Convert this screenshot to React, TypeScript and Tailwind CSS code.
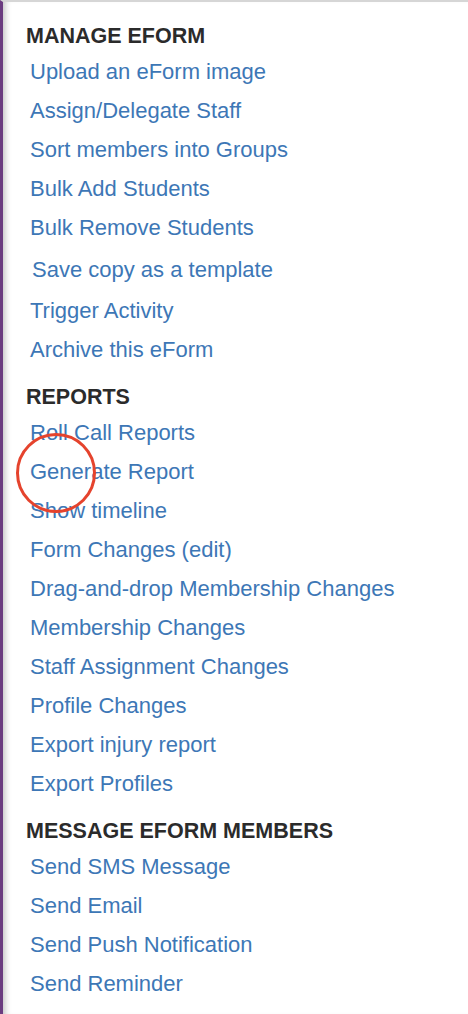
const manage = [
  "Upload an eForm image",
  "Assign/Delegate Staff",
  "Sort members into Groups",
  "Bulk Add Students",
  "Bulk Remove Students",
];

const reports = [
  "Roll Call Reports",
  "Generate Report",
  "Show timeline",
  "Form Changes (edit)",
  "Drag-and-drop Membership Changes",
  "Membership Changes",
  "Staff Assignment Changes",
  "Profile Changes",
  "Export injury report",
  "Export Profiles",
];

const message = [
  "Send SMS Message",
  "Send Email",
  "Send Push Notification",
  "Send Reminder",
];

function Heading({ children, className = "" }: { children: string; className?: string }) {
  return (
    <h2 className={`h-[32px] pl-[23px] text-[21.5px] leading-[32px] font-bold text-[#2b2b2b] ${className}`}>
      {children}
    </h2>
  );
}

function NavLink({ label, className = "" }: { label: string; className?: string }) {
  return (
    <a href="#" className={`block h-[39px] pl-[27px] text-[22px] leading-[39px] text-[#3d77b6] whitespace-nowrap ${className}`}>
      {label}
    </a>
  );
}

export default function App() {
  return (
    <main
      className="relative min-h-screen w-full bg-white border-l-[3px] border-t-2 border-l-[#6b3c80] border-t-[#d6d6d6] shadow-[inset_7px_0_6px_-5px_rgba(0,0,0,0.25)] overflow-hidden"
      style={{ fontFamily: '"Liberation Sans", Arial, Helvetica, sans-serif' }}
    >
      <div className="pt-[18px]">
        <Heading>MANAGE EFORM</Heading>
        {manage.map((l) => (
          <NavLink key={l} label={l} />
        ))}
        <NavLink label="Save copy as a template" className="mt-[3px] pl-[29px]" />
        <NavLink label="Trigger Activity" className="mt-[2px]" />
        <NavLink label="Archive this eForm" />

        <Heading className="mt-[12px]">REPORTS</Heading>
        {reports.map((l) => (
          <NavLink key={l} label={l} />
        ))}

        <Heading className="mt-[12px]">MESSAGE EFORM MEMBERS</Heading>
        {message.map((l) => (
          <NavLink key={l} label={l} />
        ))}
      </div>

      {/* annotation circle over "Generate Report" */}
      <div className="absolute left-[13px] top-[431px] h-[80px] w-[80px] rounded-full border-[3px] border-[#e5432d] pointer-events-none" />
    </main>
  );
}
